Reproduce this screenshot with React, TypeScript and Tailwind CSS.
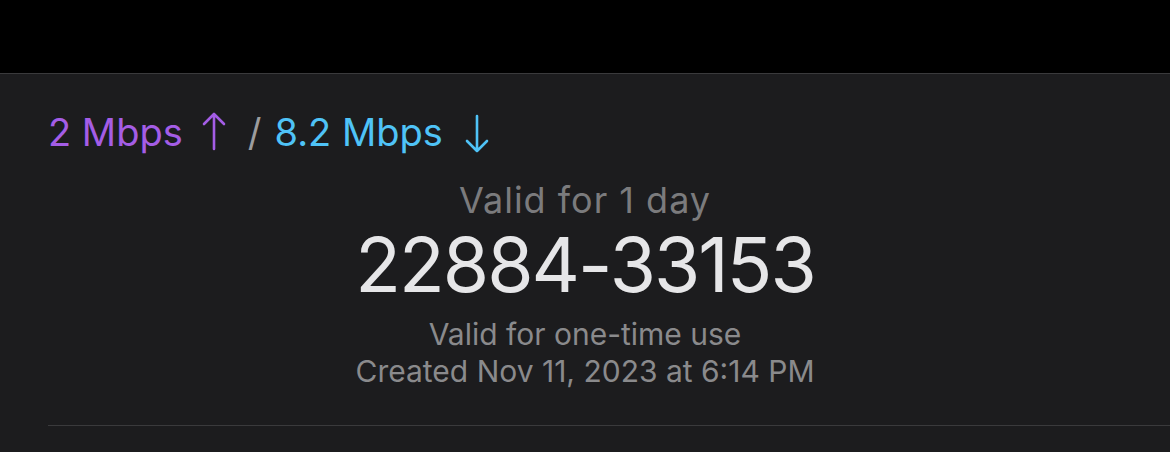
function Arrow({ down, color }: { down?: boolean; color: string }) {
  return (
    <svg width="24" height="40" viewBox="0 0 24 40" className={down ? "rotate-180" : ""} fill="none" stroke={color} strokeWidth="2.6" strokeLinecap="round" strokeLinejoin="round">
      <path d="M12 3v35M2 13l10-10 10 10" />
    </svg>
  );
}

export default function App() {
  return (
    <div className="h-[452px] w-[1170px] overflow-hidden bg-[#1c1c1e] font-['Inter',sans-serif]">
      <div className="h-[74px] border-b border-[#3a3a3c] bg-black" />
      <div className="pl-[48px]">
        <div className="mt-[26px] flex h-[64px] items-center text-[38px]">
          <span className="text-[#a45de6]">2 Mbps</span>
          <span className="ml-[19px] mt-[-2px]"><Arrow color="#a45de6" /></span>
          <span className="ml-[22px] text-[#9c9c9e]">/</span>
          <span className="ml-[13px] text-[#4fc3f7]">8.2 Mbps</span>
          <span className="ml-[22px] mt-[4px]"><Arrow down color="#4fc3f7" /></span>
        </div>
        <div className="flex flex-col items-center pr-[48px]">
          <div className="mt-[16px] text-[36px] leading-[40px] tracking-[1px] text-[#7b7b7d]">Valid for 1 day</div>
          <div className="mt-[2px] text-[75px] leading-[86px] tracking-[-2px] text-[#e6e6e8]">22884-33153</div>
          <div className="mt-[9px] text-[30px] leading-[34px] text-[#8a8a8c]">Valid for one-time use</div>
          <div className="mt-[1px] text-[30px] leading-[38px] text-[#8a8a8c]">Created Nov 11, 2023 at 6:14 PM</div>
        </div>
        <div className="mt-[35px] h-px bg-[#3a3a3c]" />
      </div>
    </div>
  );
}
